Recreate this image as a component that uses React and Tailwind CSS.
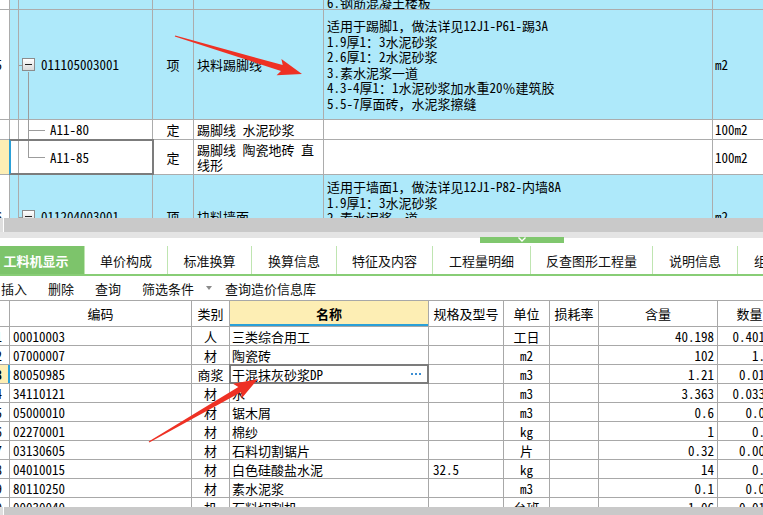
import React from 'react';

// 清单区 (上半部分) 的列宽：行号 | 树缩进 | 编码 | 类别 | 名称 | 项目特征 | 单位
const topLine = 'border-[#acacac]';

const descRow1 = [
    '适用于踢脚1，做法详见12J1-P61-踢3A',
    '1.9厚1：3水泥砂浆',
    '2.6厚1：2水泥砂浆',
    '3.素水泥浆一道',
    '4.3-4厚1：1水泥砂浆加水重20％建筑胶',
    '5.5-7厚面砖，水泥浆擦缝',
];

const descRow4 = [
    '适用于墙面1，做法详见12J1-P82-内墙8A',
    '1.9厚1：3水泥砂浆',
    '2.素水泥浆一道',
    '3.4厚1：1水泥砂浆加水重20％建筑胶',
    '4.4-5厚釉面砖，白水泥浆擦缝',
];

const rcj = [
    { n: '1', code: '00010003', lb: '人', name: '三类综合用工', gg: '', dw: '工日', hl: '40.198', sl: '0.40198' },
    { n: '2', code: '07000007', lb: '材', name: '陶瓷砖', gg: '', dw: 'm2', hl: '102', sl: '1.02' },
    { n: '3', code: '80050985', lb: '商浆', name: '干混抹灰砂浆DP', gg: '', dw: 'm3', hl: '1.21', sl: '0.0121', sel: true },
    { n: '4', code: '34110121', lb: '材', name: '水', gg: '', dw: 'm3', hl: '3.363', sl: '0.03363' },
    { n: '5', code: '05000010', lb: '材', name: '锯木屑', gg: '', dw: 'm3', hl: '0.6', sl: '0.006' },
    { n: '6', code: '02270001', lb: '材', name: '棉纱', gg: '', dw: 'kg', hl: '1', sl: '0.01' },
    { n: '7', code: '03130605', lb: '材', name: '石料切割锯片', gg: '', dw: '片', hl: '0.32', sl: '0.0032' },
    { n: '8', code: '04010015', lb: '材', name: '白色硅酸盐水泥', gg: '32.5', dw: 'kg', hl: '14', sl: '0.14' },
    { n: '9', code: '80110250', lb: '材', name: '素水泥浆', gg: '', dw: 'm3', hl: '0.1', sl: '0.001' },
    { n: '10', code: '00030040', lb: '机', name: '石料切割机', gg: '', dw: '台班', hl: '1.06', sl: '0.0106' },
];

const tabs = [
    { t: '工料机显示', w: 'w-[97px] -ml-[12px]', on: true },
    { t: '单价构成', w: 'w-[83px]' },
    { t: '标准换算', w: 'w-[84px]' },
    { t: '换算信息', w: 'w-[85px]' },
    { t: '特征及内容', w: 'w-[96px]' },
    { t: '工程量明细', w: 'w-[98px]' },
    { t: '反查图形工程量', w: 'w-[122px]' },
    { t: '说明信息', w: 'w-[85px]' },
    { t: '组价方案', w: 'w-[85px]' },
];

// 行号列被横向滚动挡住，只露出数字的右边一点
function RowNo({ n, bold }) {
    return <div className={`w-[22px] -ml-[20px] text-right ${bold ? 'font-bold' : ''}`}>{n}</div>;
}

function TreeBox() {
    return (
        <div className="w-[13px] h-[13px] border border-[#8c8c8c] bg-gradient-to-b from-white to-[#d9d9d9] flex items-center justify-center">
            <div className="w-[7px] h-[1.5px] bg-[#222]" />
        </div>
    );
}

function QdRow({ h, bg, no, code, lb, name, desc, dw, descTop }) {
    return (
        <div className={`flex shrink-0 border-b ${topLine} ${h} ${bg}`}>
            <div className={`w-[10px] shrink-0 border-r ${topLine} bg-white overflow-hidden flex items-center`}>
                <RowNo n={no} />
            </div>
            <div className={`w-[9px] shrink-0 border-r ${topLine}`} />
            <div className={`w-[134px] shrink-0 border-r ${topLine} flex items-center`}>
                <div className="relative w-[22px] h-full flex items-center pl-[3px]">
                    <div className="absolute left-0 top-1/2 w-[3px] h-px bg-[#9c9c9c]" />
                    <TreeBox />
                    {code === '011105003001' && (
                        <div className="absolute left-[9px] top-[calc(50%+7px)] bottom-[-1px] w-px bg-[#9c9c9c]" />
                    )}
                </div>
                <span>{code}</span>
            </div>
            <div className={`w-[41px] shrink-0 border-r ${topLine} flex items-center justify-center`}>{lb}</div>
            <div className={`w-[130px] shrink-0 border-r ${topLine} flex items-center pl-[3px]`}>{name}</div>
            <div className={`w-[389px] shrink-0 border-r ${topLine} flex flex-col pl-[3px] leading-[15.5px] ${descTop ? 'pt-[4px]' : 'justify-center'}`}>
                {desc.map((d) => <div key={d}>{d}</div>)}
            </div>
            <div className="flex-1 flex items-center pl-[2px]">{dw}</div>
        </div>
    );
}

function DeRow({ h, code, name, last, sel }) {
    return (
        <div className={`flex shrink-0 border-b ${topLine} ${h} bg-white`}>
            <div className={`w-[10px] shrink-0 border-r ${topLine} ${sel ? 'bg-[#fdeeb4]' : 'bg-white'}`} />
            <div className="relative flex">
                <div className={`w-[9px] shrink-0 border-r ${topLine}`} />
                <div className={`relative w-[134px] shrink-0 border-r ${topLine} flex items-center`}>
                    <div className={`absolute left-[9px] top-[-1px] w-px bg-[#9c9c9c] ${last ? 'h-[calc(50%+1px)]' : 'bottom-[-1px]'}`} />
                    <div className="absolute left-[9px] top-1/2 w-[17px] h-px bg-[#9c9c9c]" />
                    <span className="ml-[31px]">{code}</span>
                </div>
                {sel && (
                    <div className="absolute -left-px -top-px right-[-1px] bottom-[-1px] border-2 border-[#7c7c7c] border-l-[#2aa0d8]" />
                )}
            </div>
            <div className={`w-[41px] shrink-0 border-r ${topLine} flex items-center justify-center`}>定</div>
            <div className={`w-[130px] shrink-0 border-r ${topLine} flex items-center pl-[3px] pr-[1px] leading-[15.5px]`}>{name}</div>
            <div className={`w-[389px] shrink-0 border-r ${topLine}`} />
            <div className="flex-1 flex items-center pl-[2px]">100m2</div>
        </div>
    );
}

function QingdanTable() {
    return (
        <div className="h-[218px] shrink-0 overflow-hidden flex flex-col">
            {/* 上一条清单的最后一行，只露出一半 */}
            <div className={`flex h-[10px] shrink-0 border-b ${topLine} bg-[#aee9fa]`}>
                <div className={`w-[10px] shrink-0 border-r ${topLine} bg-white`} />
                <div className={`w-[9px] shrink-0 border-r ${topLine}`} />
                <div className={`w-[134px] shrink-0 border-r ${topLine}`} />
                <div className={`w-[41px] shrink-0 border-r ${topLine}`} />
                <div className={`w-[130px] shrink-0 border-r ${topLine}`} />
                <div className={`w-[389px] shrink-0 border-r ${topLine} flex items-end pl-[3px] overflow-hidden`}>
                    <span className="whitespace-nowrap -mb-px">6.钢筋混凝土楼板</span>
                </div>
                <div className="flex-1" />
            </div>
            <QdRow h="h-[110px]" bg="bg-[#aee9fa]" no="15" code="011105003001" lb="项" name="块料踢脚线" desc={descRow1} dw="m2" />
            <DeRow h="h-[20px]" code="A11-80" name="踢脚线 水泥砂浆" />
            <DeRow h="h-[35px]" code="A11-85" name="踢脚线 陶瓷地砖 直线形" last sel />
            <QdRow h="h-[84px]" bg="bg-[#aee9fa]" no="16" code="011204003001" lb="项" name="块料墙面" desc={descRow4} dw="m2" descTop />
        </div>
    );
}

function HScroll({ h }) {
    return (
        <div className={`flex shrink-0 ${h}`}>
            <div className="w-[3px] bg-[#dedede]" />
            <div className="w-px bg-white" />
            <div className="flex-1 bg-[#c9c9c9]" />
        </div>
    );
}

function Splitter() {
    return (
        <div className="relative h-[14px] shrink-0">
            <div className="h-[6px] bg-[#e4e4e4]" />
            <div className="absolute left-[480px] top-[5px] w-[84px] h-[6px] bg-[#80c76e] flex justify-center">
                <svg width="10" height="5" viewBox="0 0 10 5">
                    <path d="M1.5 0.5 L5 4 L8.5 0.5" stroke="#ffffff" strokeWidth="1.4" fill="none" />
                </svg>
            </div>
        </div>
    );
}

function Tabs() {
    return (
        <div className="flex h-[30px] shrink-0 border-b-2 border-[#88cd76]">
            {tabs.map((tab) => (
                <div
                    key={tab.t}
                    className={`${tab.w} shrink-0 h-full flex items-center justify-center border-r border-[#bfe5b1] ${tab.on ? 'bg-[#7dc46b] text-white font-bold' : 'bg-white text-[#111]'}`}
                >
                    {tab.t}
                </div>
            ))}
        </div>
    );
}

function Toolbar() {
    return (
        <div className="flex items-center h-[24px] shrink-0 text-[#111]">
            <span className="ml-px">插入</span>
            <span className="ml-[21px]">删除</span>
            <span className="ml-[21px]">查询</span>
            <span className="ml-[21px]">筛选条件</span>
            <svg className="ml-[12px]" width="6" height="4" viewBox="0 0 6 4">
                <path d="M0 0 H6 L3 4 Z" fill="#8a8a8a" />
            </svg>
            <span className="ml-[13px]">查询造价信息库</span>
        </div>
    );
}

const bLine = 'border-[#a8a8a8]';

function RcjTable() {
    return (
        <div className="h-[207px] shrink-0 overflow-hidden flex flex-col">
            <div className={`flex h-[27px] shrink-0 border-y ${bLine}`}>
                <div className={`w-[10px] shrink-0 border-r ${bLine}`} />
                <div className={`w-[182px] shrink-0 border-r ${bLine} flex items-center justify-center`}>编码</div>
                <div className={`w-[38px] shrink-0 border-r ${bLine} flex items-center justify-center`}>类别</div>
                <div className={`w-[199px] shrink-0 border-r ${bLine} flex items-center justify-center bg-[#fdeeb4] font-bold shadow-[inset_0_-2px_0_#2aa0d8]`}>名称</div>
                <div className={`w-[75px] shrink-0 border-r ${bLine} flex items-center justify-center`}>规格及型号</div>
                <div className={`w-[46px] shrink-0 border-r ${bLine} flex items-center justify-center`}>单位</div>
                <div className={`w-[49px] shrink-0 border-r ${bLine} flex items-center justify-center`}>损耗率</div>
                <div className={`w-[119px] shrink-0 border-r ${bLine} flex items-center justify-center`}>含量</div>
                <div className={`w-[64px] shrink-0 border-r ${bLine} flex items-center justify-center`}>数量</div>
            </div>
            {rcj.map((r) => (
                <div key={r.n} className={`flex h-[19px] shrink-0 border-b ${bLine}`}>
                    <div className={`w-[10px] shrink-0 border-r ${r.sel ? 'bg-[#fdeeb4] border-[#2aa0d8] border-r-2' : bLine} overflow-hidden flex items-center`}>
                        <RowNo n={r.n} bold={r.sel} />
                    </div>
                    <div className={`w-[182px] shrink-0 border-r ${bLine} flex items-center pl-[3px]`}>{r.code}</div>
                    <div className={`w-[38px] shrink-0 border-r ${bLine} flex items-center justify-center`}>{r.lb}</div>
                    <div className={`relative w-[199px] shrink-0 border-r ${bLine} flex items-center pl-[2px]`}>
                        {r.name}
                        {r.sel && (
                            <div className="absolute -left-px -top-px right-[-1px] bottom-[-1px] border-2 border-[#7c7c7c] flex items-center justify-end pr-[6px] gap-[2px]">
                                <div className="w-[2px] h-[2px] bg-[#3d8fd4]" />
                                <div className="w-[2px] h-[2px] bg-[#3d8fd4]" />
                                <div className="w-[2px] h-[2px] bg-[#3d8fd4]" />
                            </div>
                        )}
                    </div>
                    <div className={`w-[75px] shrink-0 border-r ${bLine} flex items-center pl-[4px]`}>{r.gg}</div>
                    <div className={`w-[46px] shrink-0 border-r ${bLine} flex items-center justify-center`}>{r.dw}</div>
                    <div className={`w-[49px] shrink-0 border-r ${bLine}`} />
                    <div className={`w-[119px] shrink-0 border-r ${bLine} flex items-center justify-end pr-[3px]`}>{r.hl}</div>
                    <div className={`w-[64px] shrink-0 border-r ${bLine} flex items-center justify-end pr-[3px]`}>{r.sl}</div>
                </div>
            ))}
        </div>
    );
}

// 截图上画的红色箭头
function arrowPoints(x1, y1, x2, y2) {
    const head = 21, headW = 17, shaftW = 6;
    const dx = x2 - x1, dy = y2 - y1;
    const len = Math.hypot(dx, dy);
    const ux = dx / len, uy = dy / len;
    const nx = -uy, ny = ux;
    const bx = x2 - ux * head, by = y2 - uy * head;
    const p = (x, y) => `${x.toFixed(1)},${y.toFixed(1)}`;
    return [
        p(x1 + nx * 0.6, y1 + ny * 0.6),
        p(bx + nx * shaftW / 2, by + ny * shaftW / 2),
        p(bx - ux * 3 + nx * headW / 2, by - uy * 3 + ny * headW / 2),
        p(x2, y2),
        p(bx - ux * 3 - nx * headW / 2, by - uy * 3 - ny * headW / 2),
        p(bx - nx * shaftW / 2, by - ny * shaftW / 2),
        p(x1 - nx * 0.6, y1 - ny * 0.6),
    ].join(' ');
}

function Arrows() {
    return (
        <svg className="absolute inset-0 pointer-events-none" width="763" height="515">
            <polygon points={arrowPoints(175, 36, 302, 74)} fill="#ee3124" />
            <polygon points={arrowPoints(149, 442, 258, 379)} fill="#ee3124" />
        </svg>
    );
}

export default function App() {
    return (
        <div className="relative w-[763px] h-[515px] overflow-hidden bg-white flex flex-col text-[13px] leading-[15px] text-black font-[family-name:'Noto_Sans_Mono_CJK_SC','Noto_Sans_CJK_SC',monospace]">
            <QingdanTable />
            <HScroll h="h-[14px]" />
            <Splitter />
            <Tabs />
            <Toolbar />
            <RcjTable />
            <HScroll h="h-[8px]" />
            <Arrows />
        </div>
    );
}
